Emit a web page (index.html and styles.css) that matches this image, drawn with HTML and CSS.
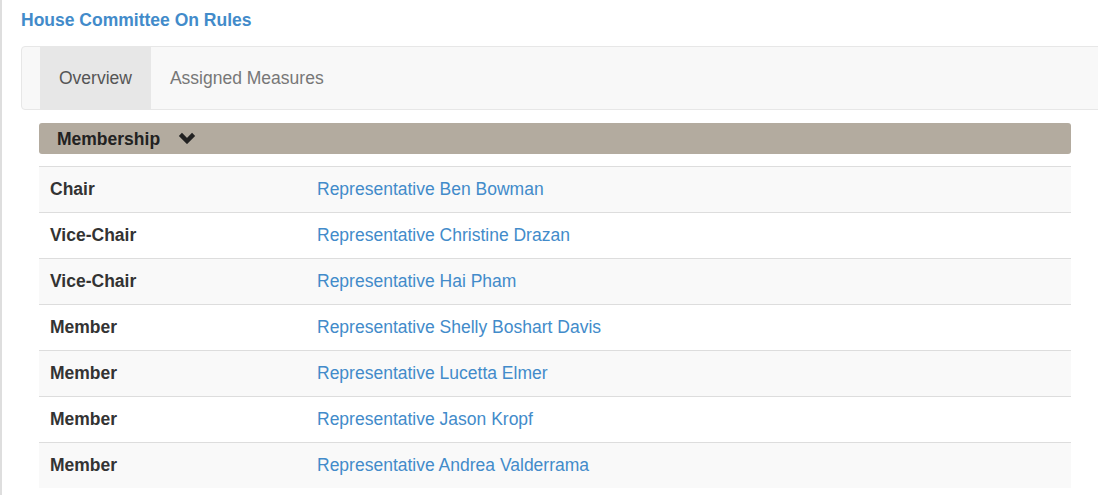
FILE: index.html
```html
<!DOCTYPE html>
<html>
<head>
<meta charset="utf-8">
<link rel="stylesheet" href="styles.css">
</head>
<body>
<div class="page">
  <h1 class="title"><a href="#">House Committee On Rules</a></h1>
  <nav class="tabs">
    <a class="tab active" href="#">Overview</a>
    <a class="tab" href="#">Assigned Measures</a>
  </nav>
  <div class="content">
    <div class="panel-head">
      <span class="panel-title">Membership</span>
      <svg class="chev" width="18" height="12" viewBox="0 0 18 12"><polyline points="2.4,2.4 9,9 15.6,2.4" fill="none" stroke="#222" stroke-width="4.4"/></svg>
    </div>
    <table class="members">
      <tr><th>Chair</th><td><a href="#">Representative Ben Bowman</a></td></tr>
      <tr><th>Vice-Chair</th><td><a href="#">Representative Christine Drazan</a></td></tr>
      <tr><th>Vice-Chair</th><td><a href="#">Representative Hai Pham</a></td></tr>
      <tr><th>Member</th><td><a href="#">Representative Shelly Boshart Davis</a></td></tr>
      <tr><th>Member</th><td><a href="#">Representative Lucetta Elmer</a></td></tr>
      <tr><th>Member</th><td><a href="#">Representative Jason Kropf</a></td></tr>
      <tr><th>Member</th><td><a href="#">Representative Andrea Valderrama</a></td></tr>
    </table>
  </div>
</div>
</body>
</html>
```
FILE: styles.css
```css
html, body {
  margin: 0;
  padding: 0;
  overflow: hidden;
  background: #fff;
}
body {
  font-family: "Liberation Sans", Arial, sans-serif;
  font-size: 17.5px;
  line-height: 25px;
  color: #333;
}
.page {
  border-left: 2px solid #dedede;
  min-height: 495px;
  box-sizing: border-box;
  padding: 8px 9px 0 19px;
}
.title {
  margin: 0;
  font-size: 17.5px;
  line-height: 25px;
  font-weight: bold;
}
.title a {
  color: #428bca;
  text-decoration: none;
}
.tabs {
  margin: 13px -40px 0 0;
  border: 1px solid #e7e7e7;
  border-radius: 4px;
  background: #f8f8f8;
  display: flex;
  padding-left: 18px;
  height: 62px;
}
.tab {
  display: block;
  padding: 18.5px 19px 18.5px;
  line-height: 25px;
  color: #777;
  text-decoration: none;
}
.tab.active {
  background: #e7e7e7;
  color: #555;
}
.content {
  margin: 13px 18px 0 18px;
}
.panel-head {
  background: #b3ab9f;
  border-radius: 3px;
  height: 31px;
  display: flex;
  align-items: center;
  padding-left: 18px;
  color: #222;
}
.panel-title {
  font-weight: bold;
  line-height: 25px;
  padding-top: 1px;
}
.chev {
  margin-left: 18px;
  margin-bottom: 2px;
}
.members {
  margin-top: 12px;
  width: 100%;
  border-collapse: collapse;
}
.members th, .members td {
  border-top: 1px solid #ddd;
  padding: 10px 11px;
  line-height: 25px;
  text-align: left;
  vertical-align: top;
}
.members th {
  width: 245px;
  font-weight: bold;
  color: #333;
}
.members tr:nth-child(odd) {
  background: #f9f9f9;
}
.members a {
  color: #428bca;
  text-decoration: none;
}
```
